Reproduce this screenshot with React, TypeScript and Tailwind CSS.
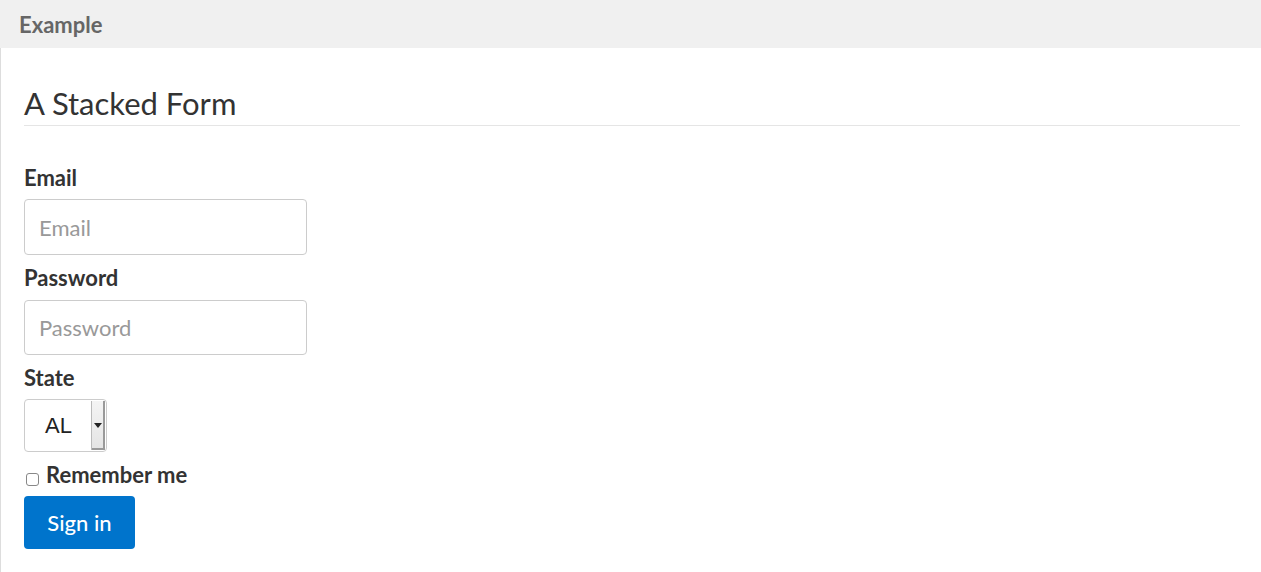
export default function App() {
  return (
    <div className="min-h-screen bg-white font-['Lato',sans-serif] text-[#333]">
      <div className="flex h-[48px] items-center bg-[#f0f0f0] pl-[19px]">
        <span className="text-[22px] font-bold text-[#666]">Example</span>
      </div>

      <div className="h-[524px] border-l border-[#ddd] pt-[38px] pl-[23px] pr-[21px]">
        <h2 className="border-b border-[#e5e5e5] pb-[5px] text-[31px] leading-[34px] font-normal text-[#333]">
          A Stacked Form
        </h2>

        <form className="mt-[37px] flex flex-col" onSubmit={(e) => e.preventDefault()}>
          <label className="text-[22px] leading-[30px] font-bold">Email</label>
          <input
            type="text"
            placeholder="Email"
            className="mt-[6px] h-[56px] w-[283px] rounded-[4px] border border-[#ccc] px-[14px] text-[22px] outline-none placeholder:text-[#999]"
          />

          <label className="mt-[8px] text-[22px] leading-[30px] font-bold">Password</label>
          <input
            type="password"
            placeholder="Password"
            className="mt-[7px] h-[55px] w-[283px] rounded-[4px] border border-[#ccc] px-[14px] text-[22px] outline-none placeholder:text-[#999]"
          />

          <label className="mt-[8px] text-[22px] leading-[30px] font-bold">State</label>
          <div className="mt-[6px] flex h-[53px] w-[83px] overflow-hidden rounded-[4px] border border-[#ccc]">
            <div className="flex flex-1 items-center justify-center pl-[1px] font-['Liberation_Sans',sans-serif] text-[22px] text-[#222]">
              AL
            </div>
            <div className="my-[1px] mr-[1px] flex w-[14px] items-center justify-center border-l border-[#bbb] bg-gradient-to-b from-[#f4f4f4] to-[#e4e4e4] shadow-[inset_-2px_-2px_0_#9a9a9a]">
              <svg width="8" height="5" viewBox="0 0 8 5" className="-ml-[1px]">
                <path d="M0 0h8L4 5z" fill="#222" />
              </svg>
            </div>
          </div>

          <label className="mt-[8px] flex h-[30px] items-center">
            <input
              type="checkbox"
              className="mt-[9px] ml-[2px] h-[13px] w-[13px] appearance-none rounded-[3px] border border-[#888] bg-white"
            />
            <span className="ml-[7px] text-[22px] leading-[30px] font-bold">Remember me</span>
          </label>

          <button
            type="submit"
            className="mt-[6px] h-[53px] w-[111px] rounded-[4px] bg-[#0074cc] text-[22px] font-medium text-white"
          >
            Sign in
          </button>
        </form>
      </div>
    </div>
  );
}
